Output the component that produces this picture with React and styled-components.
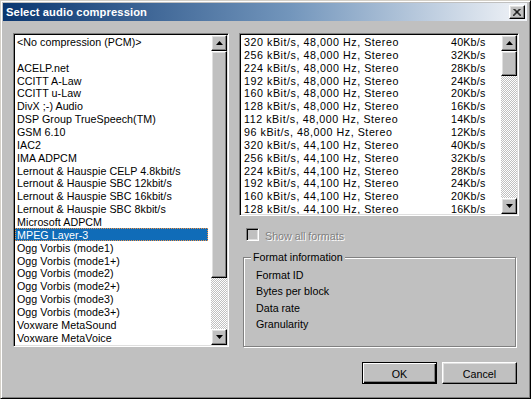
import React from 'react';
import styled, { createGlobalStyle, css } from 'styled-components';

const GlobalStyle = createGlobalStyle`
  html, body {
    margin: 0;
    padding: 0;
    background: #c0c0c0;
  }
  body {
    font-family: "Liberation Sans", Arial, sans-serif;
  }
  * {
    box-sizing: border-box;
  }
`;

// classic 3D edges
const raised = css`
  background: #c0c0c0;
  border: 1px solid;
  border-color: #fff #000 #000 #fff;
  box-shadow: inset -1px -1px #808080, inset 1px 1px #dfdfdf;
`;

const sunken = css`
  border: 1px solid;
  border-color: #808080 #fff #fff #808080;
  box-shadow: inset 1px 1px #000, inset -1px -1px #dfdfdf;
`;

const Window = styled.div`
  width: 531px;
  height: 399px;
  display: flex;
  flex-direction: column;
  background: #c0c0c0;
  border: 1px solid;
  border-color: #d4d0c8 #000 #000 #d4d0c8;
  box-shadow: inset 1px 1px #fff, inset -1px -1px #808080;
  padding: 2px 3px 3px 2px;
  font-size: 10.7px;
  color: #000;
`;

const TitleBar = styled.div`
  height: 18px;
  display: flex;
  align-items: center;
  padding: 0 2px 0 3px;
  background: linear-gradient(to right, #0a3670, #7396bc 55%, #f2f4f8);
`;

const TitleText = styled.span`
  color: #fff;
  font-weight: bold;
  font-size: 11.2px;
  letter-spacing: 0.1px;
`;

const CloseButton = styled.div`
  ${raised};
  margin-left: auto;
  width: 16px;
  height: 14px;
  display: flex;
  align-items: center;
  justify-content: center;
`;

const Body = styled.div`
  flex: 1;
  display: flex;
  flex-direction: column;
  padding: 12px 8px 0 10px;
`;

const TopRow = styled.div`
  display: flex;
  gap: 10px;
`;

const ListBox = styled.div`
  ${sunken};
  width: ${(p) => p.$width};
  height: ${(p) => p.$height}px;
  padding: 1px;
  background: #fff;
  display: flex;
`;

const Items = styled.div`
  flex: 1;
  min-width: 0;
  overflow: hidden;
  display: flex;
  flex-direction: column;
  letter-spacing: ${(p) => p.$spacing}px;
`;

const Row = styled.div`
  flex: none;
  height: 12.87px;
  line-height: 15px;
  padding-left: ${(p) => p.$indent}px;
  white-space: nowrap;
  ${(p) =>
    p.$selected &&
    css`
      line-height: 14px;
      background: #106cb8;
      color: #fff;
      outline: 1px dotted #ef9347;
      outline-offset: -1px;
      margin-right: 3px;
    `}
`;

const FormatRow = styled(Row)`
  display: grid;
  grid-template-columns: 207px auto;
`;

const Rate = styled.span`
  letter-spacing: 0.2px;
`;

const ScrollBar = styled.div`
  width: 16px;
  display: flex;
  flex-direction: column;
`;

const ScrollButton = styled.div`
  ${raised};
  flex: none;
  height: 16px;
  display: flex;
  align-items: center;
  justify-content: center;
`;

const Track = styled.div`
  flex: 1;
  display: flex;
  flex-direction: column;
  background-color: #fff;
  background-image: conic-gradient(#c0c0c0 25%, #fff 0 50%, #c0c0c0 0 75%, #fff 0);
  background-size: 2px 2px;
`;

const Thumb = styled.div`
  ${raised};
  flex: none;
  height: ${(p) => p.$size}px;
`;

const RightColumn = styled.div`
  flex: 1;
  display: flex;
  flex-direction: column;
`;

const CheckRow = styled.div`
  display: flex;
  align-items: center;
  gap: 6px;
  margin-top: 12px;
  padding-left: 7px;
  height: 13px;
`;

const CheckBox = styled.div`
  ${sunken};
  width: 13px;
  height: 13px;
  background: #c0c0c0;
`;

const DisabledLabel = styled.span`
  color: #808080;
  text-shadow: 1px 1px #fff;
  padding-top: 2px;
`;

const Group = styled.div`
  position: relative;
  margin: 16px 3px 0 4px;
  height: 90px;
  border: 1px solid #808080;
  box-shadow: inset 1px 1px #fff, 1px 1px #fff;
  padding: 9px 0 0 12px;
  display: flex;
  flex-direction: column;
`;

const Legend = styled.span`
  position: absolute;
  top: -7px;
  left: 7px;
  padding: 0 2px;
  line-height: 13px;
  background: #c0c0c0;
`;

const InfoLine = styled.div`
  height: 16.4px;
  line-height: 16.4px;
`;

const ButtonRow = styled.div`
  display: flex;
  justify-content: flex-end;
  gap: 5px;
  margin-top: 15px;
  margin-right: 2px;
`;

const Button = styled.div`
  width: 75px;
  height: 22px;
  display: flex;
  align-items: center;
  justify-content: center;
  padding-top: 1px;
  background: #c0c0c0;
  ${(p) =>
    p.$default
      ? css`
          border: 1px solid #000;
          box-shadow: inset 1px 1px #fff, inset -1px -1px #000, inset -2px -2px #808080;
        `
      : css`
          border: 1px solid;
          border-color: #fff #000 #000 #fff;
          box-shadow: inset -1px -1px #808080, inset 1px 1px #dfdfdf;
        `}
`;

const Arrow = ({ down }) => (
  <svg width="7" height="4" viewBox="0 0 7 4">
    <polygon points={down ? '0,0 7,0 3.5,4' : '0,4 7,4 3.5,0'} fill="#000" />
  </svg>
);

const CloseGlyph = () => (
  <svg width="8" height="7" viewBox="0 0 8 7">
    <path d="M0.5 0 L7.5 7 M1.5 0 L8.5 7 M7.5 0 L0.5 7 M6.5 0 L-0.5 7" stroke="#000" strokeWidth="1" />
  </svg>
);

const Scroller = ({ thumb }) => (
  <ScrollBar>
    <ScrollButton>
      <Arrow />
    </ScrollButton>
    <Track>
      <Thumb $size={thumb} />
    </Track>
    <ScrollButton>
      <Arrow down />
    </ScrollButton>
  </ScrollBar>
);

const codecs = [
  '<No compression (PCM)>',
  '',
  'ACELP.net',
  'CCITT A-Law',
  'CCITT u-Law',
  'DivX ;-) Audio',
  'DSP Group TrueSpeech(TM)',
  'GSM 6.10',
  'IAC2',
  'IMA ADPCM',
  'Lernout & Hauspie CELP 4.8kbit/s',
  'Lernout & Hauspie SBC 12kbit/s',
  'Lernout & Hauspie SBC 16kbit/s',
  'Lernout & Hauspie SBC 8kbit/s',
  'Microsoft ADPCM',
  'MPEG Layer-3',
  'Ogg Vorbis (mode1)',
  'Ogg Vorbis (mode1+)',
  'Ogg Vorbis (mode2)',
  'Ogg Vorbis (mode2+)',
  'Ogg Vorbis (mode3)',
  'Ogg Vorbis (mode3+)',
  'Voxware MetaSound',
  'Voxware MetaVoice',
];

const rates = [
  [320, 40],
  [256, 32],
  [224, 28],
  [192, 24],
  [160, 20],
  [128, 16],
  [112, 14],
  [96, 12],
];

const formats = [
  ...rates.map(([k, b]) => [`${k} kBit/s, 48,000 Hz, Stereo`, `${b}Kb/s`]),
  ...rates.slice(0, 6).map(([k, b]) => [`${k} kBit/s, 44,100 Hz, Stereo`, `${b}Kb/s`]),
];

export default function App() {
  return (
    <>
      <GlobalStyle />
      <Window>
        <TitleBar>
          <TitleText>Select audio compression</TitleText>
          <CloseButton>
            <CloseGlyph />
          </CloseButton>
        </TitleBar>
        <Body>
          <TopRow>
            <ListBox $width="216px" $height={314}>
              <Items $spacing={0.05}>
                {codecs.map((name, i) => (
                  <Row key={i} $indent={2} $selected={name === 'MPEG Layer-3'}>
                    {name}
                  </Row>
                ))}
              </Items>
              <Scroller thumb={227} />
            </ListBox>
            <RightColumn>
              <ListBox $width="100%" $height={183}>
                <Items $spacing={0.55}>
                  {formats.map(([label, rate], i) => (
                    <FormatRow key={i} $indent={3}>
                      <span>{label}</span>
                      <Rate>{rate}</Rate>
                    </FormatRow>
                  ))}
                </Items>
                <Scroller thumb={25} />
              </ListBox>
              <CheckRow>
                <CheckBox />
                <DisabledLabel>Show all formats</DisabledLabel>
              </CheckRow>
              <Group>
                <Legend>Format information</Legend>
                <InfoLine>Format ID</InfoLine>
                <InfoLine>Bytes per block</InfoLine>
                <InfoLine>Data rate</InfoLine>
                <InfoLine>Granularity</InfoLine>
              </Group>
            </RightColumn>
          </TopRow>
          <ButtonRow>
            <Button $default>OK</Button>
            <Button>Cancel</Button>
          </ButtonRow>
        </Body>
      </Window>
    </>
  );
}
